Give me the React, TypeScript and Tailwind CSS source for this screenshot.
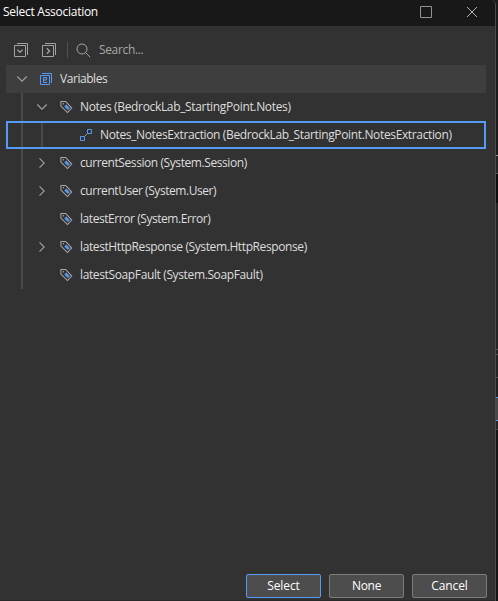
import React from 'react';

const stroke = '#a3a3a3';

function Chevron({ open }: { open: boolean }) {
  return (
    <svg width="12" height="12" viewBox="0 0 12 12" fill="none" stroke={stroke} strokeWidth="1.1" className="shrink-0">
      <path d={open ? 'M1.3 3.5 6 8.2l4.7-4.7' : 'M3.5 1.3 8.2 6l-4.7 4.7'} />
    </svg>
  );
}

function TagIcon() {
  return (
    <svg width="14" height="14" viewBox="0 0 14 14" fill="none" className="shrink-0">
      <path d="M.9 1.5h4.8l6 6.6-4.2 4.4L.9 6z" stroke="#a8a8a8" strokeWidth="1.05" />
      <circle cx="3.4" cy="3.8" r=".7" fill="#b0b0b0" />
      <path d="m4.3 6.4 1.9-1.8 3.6 3.7-1.9 1.8z" fill="#559bf5" />
    </svg>
  );
}

function AssociationIcon() {
  return (
    <svg width="14" height="14" viewBox="0 0 14 14" fill="none" stroke="#559bf5" className="shrink-0">
      <path d="M4.7 8.3 7.3 5.7" stroke="#999" />
      <path d="M7.5 1.5h4v4h-4zM.5 8.5h4v4h-4z" />
    </svg>
  );
}

function VariablesIcon() {
  return (
    <svg width="12" height="12" viewBox="0 0 12 12" fill="none" stroke="#559bf5" className="shrink-0">
      <path d="M2 .5h9.5V10M.5 2.5h9v9h-9z" />
      <path d="M7 9.5H3.5v-5h3v2.5h-3" />
    </svg>
  );
}

function TreeToggleIcon({ open }: { open: boolean }) {
  return (
    <svg width="14" height="14" viewBox="0 0 14 14" fill="none" stroke={stroke} className="shrink-0">
      <path d="M3 .5h10.5V12M.5 2.5h11v11H.5z" />
      <path d={open ? 'm3.4 6.8 2.6 2.6 2.6-2.6' : 'M4.8 5.2 7.6 8l-2.8 2.8'} strokeWidth="1.3" />
    </svg>
  );
}

const items = [
  { label: 'Notes (BedrockLab_StartingPoint.Notes)', kind: 'open', tracking: 'tracking-[-0.34px]' },
  { label: 'Notes_NotesExtraction (BedrockLab_StartingPoint.NotesExtraction)', kind: 'selected', tracking: 'tracking-[-0.36px]' },
  { label: 'currentSession (System.Session)', kind: 'closed', tracking: 'tracking-[-0.42px]' },
  { label: 'currentUser (System.User)', kind: 'closed', tracking: 'tracking-[-0.45px]' },
  { label: 'latestError (System.Error)', kind: 'leaf', tracking: 'tracking-[-0.44px]' },
  { label: 'latestHttpResponse (System.HttpResponse)', kind: 'closed', tracking: 'tracking-[-0.39px]' },
  { label: 'latestSoapFault (System.SoapFault)', kind: 'leaf', tracking: 'tracking-[-0.37px]' },
];

function TreeRow({ item }: { item: (typeof items)[number] }) {
  if (item.kind === 'selected') {
    return (
      <div className="flex h-7 items-center border-2 border-[#559bf5]">
        <div className="ml-[13px] h-6 w-[2px] bg-[#4a4a4a]" />
        <div className="ml-[18px] mr-[37px] h-6 w-[2px] bg-[#4a4a4a]" />
        <AssociationIcon />
        <span className={`ml-[6px] whitespace-nowrap leading-4 ${item.tracking}`}>{item.label}</span>
      </div>
    );
  }
  return (
    <div className="flex h-7 items-center">
      <div className="ml-[15px] h-7 w-[2px] bg-[#4a4a4a]" />
      <div className="ml-[13px] mr-3 w-3">{item.kind !== 'leaf' && <Chevron open={item.kind === 'open'} />}</div>
      <TagIcon />
      <span className={`ml-[6px] whitespace-nowrap leading-4 ${item.tracking}`}>{item.label}</span>
    </div>
  );
}

const edge = [
  ['h-[155px]', 'bg-[#1b1b1b]'],
  ['h-px', 'bg-[#999999]'],
  ['h-[17px]', 'bg-[#242424]'],
  ['h-px', 'bg-[#555555]'],
  ['h-[29px]', 'bg-[#0d0d0d]'],
  ['h-[146px]', 'bg-[#242424]'],
  ['h-px', 'bg-[#555555]'],
  ['h-[4px]', 'bg-[#242424]'],
  ['h-px', 'bg-[#555555]'],
  ['h-[22px]', 'bg-[#242424]'],
  ['h-px', 'bg-[#555555]'],
  ['h-[19px]', 'bg-[#202020]'],
  ['h-px', 'bg-[#559bf5]'],
  ['h-[22px]', 'bg-[#464646]'],
  ['h-px', 'bg-[#559bf5]'],
  ['h-[8px]', 'bg-[#242424]'],
  ['h-px', 'bg-[#444444]'],
  ['flex-1', 'bg-[#151515]'],
];

export default function App() {
  return (
    <div className="flex h-[601px] w-[498px] overflow-hidden bg-[#1b1b1b] font-['Open_Sans','Noto_Sans',sans-serif] text-[12px] text-[#dedede]">
      <div className="flex w-[496px] shrink-0 flex-col overflow-hidden rounded-tr-[5px] border-r border-[#4b4b4b] bg-[#323232]">
        <header className="flex h-[26px] shrink-0 items-center bg-[#181818] pl-[3px] text-white">
          <span className="flex-1 pb-[2px] leading-4 tracking-[-0.27px]">Select Association</span>
          <svg width="12" height="12" viewBox="0 0 12 12" fill="none" stroke="#929292" className="mb-[2px] mr-[34px]">
            <path d="M.5.5h11v11H.5z" />
          </svg>
          <svg width="12" height="12" viewBox="0 0 12 12" fill="none" stroke="#b5b5b5" className="mb-[2px] mr-[17px]">
            <path d="m1 1 10 10M11 1 1 11" />
          </svg>
        </header>
        <div className="flex h-[39px] shrink-0 items-center pl-[14px] pt-[9px]">
          <TreeToggleIcon open />
          <div className="ml-[14px]"><TreeToggleIcon open={false} /></div>
          <div className="ml-[11px] h-4 w-px bg-[#505050]" />
          <svg width="15" height="15" viewBox="0 0 15 15" fill="none" stroke={stroke} className="ml-2">
            <circle cx="6" cy="6" r="5" />
            <path d="m9.6 9.6 4.6 4.6" />
          </svg>
          <span className="ml-2 leading-4 tracking-[-0.35px] text-[#a8a8a8]">Search...</span>
        </div>
        <main className="ml-[6px] w-[480px] flex-1">
          <div className="flex h-7 items-center bg-[#3e3e3e] pl-[10px]">
            <Chevron open />
            <div className="ml-3"><VariablesIcon /></div>
            <span className="ml-2 leading-4 tracking-[-0.45px]">Variables</span>
          </div>
          {items.map((item) => <TreeRow key={item.label} item={item} />)}
        </main>
        <footer className="flex h-[27px] shrink-0 items-start gap-2 border-b border-[#292929] pl-[246px]">
          <button className="h-6 w-[75px] rounded-[2px] border border-[#559bf5] bg-[#4d4d4d] leading-[22px] tracking-[-0.1px] text-white">Select</button>
          <button className="h-6 w-[75px] rounded-[2px] border border-[#7c7c7c] bg-[#4d4d4d] leading-[22px] tracking-[-0.3px] text-white">None</button>
          <button className="h-6 w-[75px] rounded-[2px] border border-[#7c7c7c] bg-[#4d4d4d] leading-[22px] tracking-[-0.1px] text-white">Cancel</button>
        </footer>
      </div>
      <div className="flex flex-1 flex-col">
        {edge.map(([height, color], index) => <div key={index} className={`${height} ${color}`} />)}
      </div>
    </div>
  );
}
